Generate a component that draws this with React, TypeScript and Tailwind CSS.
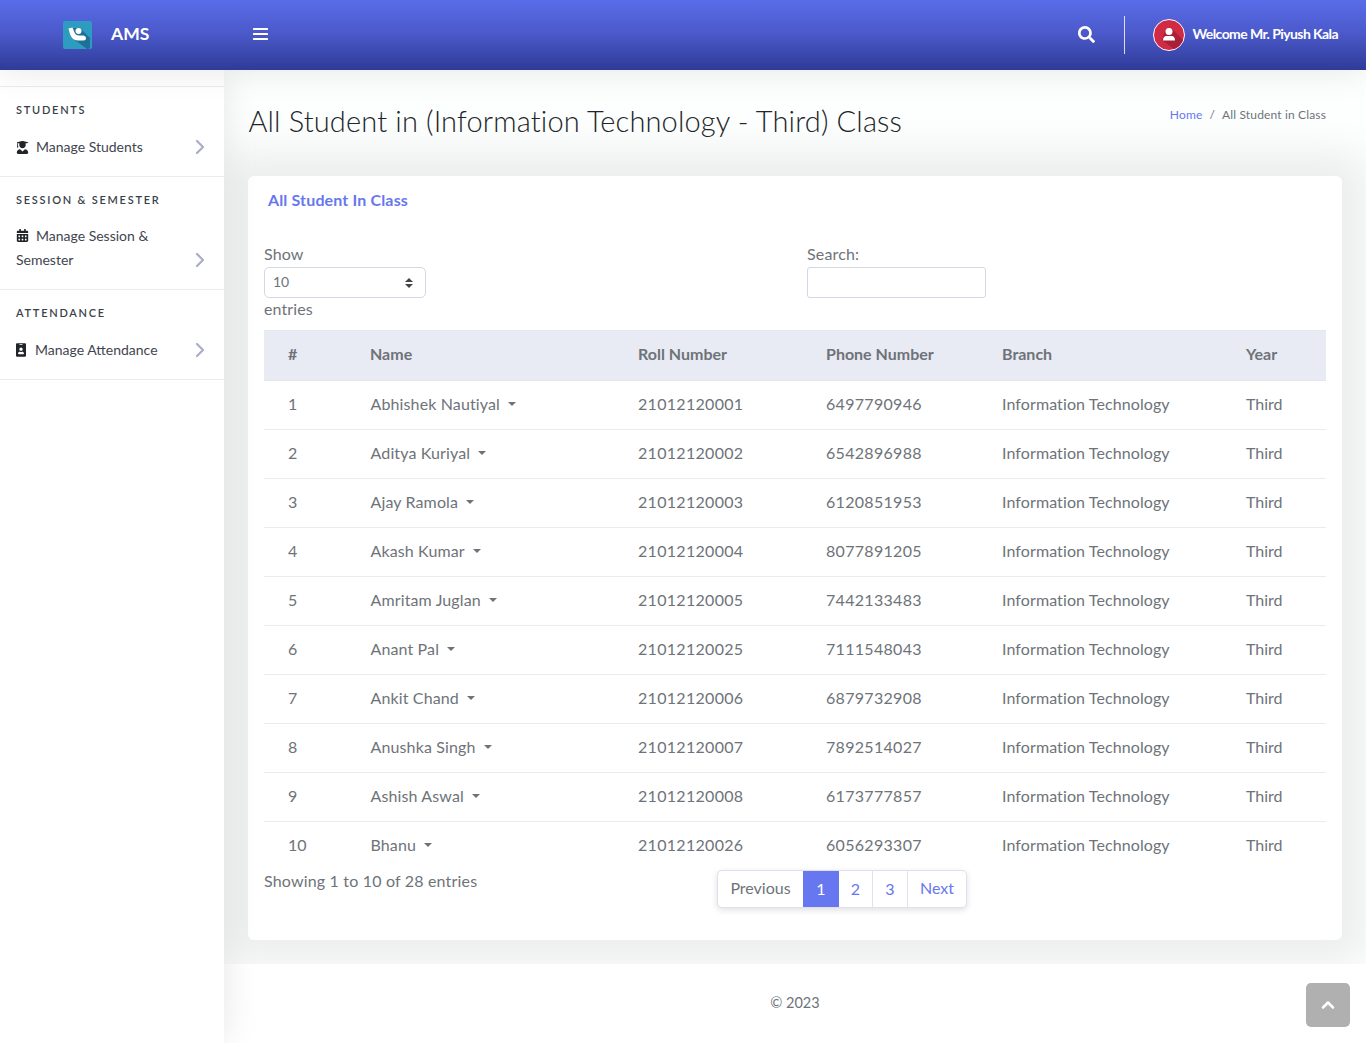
import { ChevronRight, ChevronUp } from "lucide-react";
import { FaCalendarAlt, FaIdBadge, FaSearch, FaUserGraduate } from "react-icons/fa";
import type { ReactNode } from "react";

const students = [
  ["1", "Abhishek Nautiyal", "21012120001", "6497790946"],
  ["2", "Aditya Kuriyal", "21012120002", "6542896988"],
  ["3", "Ajay Ramola", "21012120003", "6120851953"],
  ["4", "Akash Kumar", "21012120004", "8077891205"],
  ["5", "Amritam Juglan", "21012120005", "7442133483"],
  ["6", "Anant Pal", "21012120025", "7111548043"],
  ["7", "Ankit Chand", "21012120006", "6879732908"],
  ["8", "Anushka Singh", "21012120007", "7892514027"],
  ["9", "Ashish Aswal", "21012120008", "6173777857"],
  ["10", "Bhanu", "21012120026", "6056293307"],
];

function Logo() {
  return (
    <svg width="29" height="28" viewBox="0 0 29 28" className="shrink-0">
      <rect width="29" height="28" rx="2" fill="#2d9cc0" />
      <path d="M9 7 L17 7 L27 17 V26 Q27 28 25 28 H24 L8 16 Z" fill="#1f6f98" />
      <circle cx="15.5" cy="10" r="3" fill="#fff" />
      <path d="M5.5 7.5 L9.5 6.5 L12 12.5 Q13 14.5 16 14.5 H20.5 Q23 15 23 17 Q23 19.5 20.5 19.5 H15 Q9 19.5 7 13 Z" fill="#fff" />
    </svg>
  );
}

function Avatar() {
  return (
    <svg width="32" height="32" viewBox="0 0 32 32" className="shrink-0">
      <circle cx="16" cy="16" r="15.5" fill="#d02a45" stroke="#fff" />
      <path d="M13 10 L19 10 L30 21 A15 15 0 0 1 21 30 L9 21 Z" fill="#a81f38" />
      <circle cx="16" cy="12.5" r="3.5" fill="#fff" />
      <path d="M10 21.5 Q10 17 13.5 17 H18.5 Q22 17 22 21.5 Z" fill="#fff" />
    </svg>
  );
}

function Header() {
  return (
    <header className="relative z-20 flex h-[70px] shrink-0 items-center bg-gradient-to-b from-[#5a6ce9] via-[#4a58c8] to-[#2f3b98] pb-[1px] text-white shadow-[0_0_35px_rgba(0,0,0,0.1)]">
      <div className="ml-[63px] flex w-[190px] items-center">
        <Logo />
        <span className="ml-[19px] text-[17.5px] font-bold">AMS</span>
      </div>
      <svg width="15" height="12" viewBox="0 0 15 12" fill="#fff" className="mb-[1px]">
        <rect width="15" height="2" y="0" rx="0.5" />
        <rect width="15" height="2" y="5" rx="0.5" />
        <rect width="15" height="2" y="10" rx="0.5" />
      </svg>
      <div className="ml-auto flex items-center">
        <FaSearch className="text-[17px]" />
        <div className="mr-[28px] ml-[29px] h-[38px] w-px bg-white/80" />
        <Avatar />
        <span className="mr-[28px] ml-2 pb-[2px] text-[14px] font-bold tracking-[-0.58px]">Welcome Mr. Piyush Kala</span>
      </div>
    </header>
  );
}

function NavSection({ title, children }: { title: string; children: ReactNode }) {
  return (
    <div className="border-b border-[#e9ebf3]">
      <div className="pt-4 pl-4 text-[11px] leading-[14px] font-semibold tracking-[1.75px] text-[#3a3f4a]">{title}</div>
      {children}
    </div>
  );
}

function Chevron() {
  return <ChevronRight size={24} strokeWidth={2.2} className="shrink-0 text-[#a9adc8]" />;
}

function Sidebar() {
  return (
    <aside className="relative z-10 w-[224px] shrink-0 bg-white pt-4 shadow-[0_0_35px_rgba(0,0,0,0.1)]">
      <div className="border-t border-[#e9ebf3]">
        <NavSection title="STUDENTS">
          <div className="flex items-center justify-between pt-[18px] pr-3 pb-[17px] pl-4 text-[14px] leading-[24px] text-[#3f4550]">
            <span className="flex items-center">
              <FaUserGraduate className="mr-[7px] text-[13px] text-[#212529]" />
              Manage Students
            </span>
            <Chevron />
          </div>
        </NavSection>
        <NavSection title="SESSION & SEMESTER">
          <div className="flex items-end justify-between pt-[17px] pr-3 pb-[17px] pl-4 text-[14px] leading-[24px] text-[#3f4550]">
            <div>
              <FaCalendarAlt className="mr-[7px] inline-block align-[-1px] text-[13px] text-[#212529]" />
              Manage Session &amp;
              <br />
              Semester
            </div>
            <Chevron />
          </div>
        </NavSection>
        <NavSection title="ATTENDANCE">
          <div className="flex items-center justify-between pt-[18px] pr-3 pb-[17px] pl-4 text-[14px] leading-[24px] text-[#3f4550]">
            <span className="flex items-center">
              <FaIdBadge className="mr-[9px] h-[14px] w-[10px] text-[#212529]" />
              Manage Attendance
            </span>
            <Chevron />
          </div>
        </NavSection>
      </div>
    </aside>
  );
}

function StudentTable() {
  return (
    <table className="w-[1062px] table-fixed border-collapse text-left text-[16px] text-[#6e7379]">
      <colgroup>
        <col className="w-[82px]" />
        <col className="w-[268px]" />
        <col className="w-[188px]" />
        <col className="w-[176px]" />
        <col className="w-[244px]" />
        <col className="w-[104px]" />
      </colgroup>
      <thead>
        <tr className="h-[50px] border-y border-[#e3e6ee] bg-[#e8ebf3]">
          <th className="pb-1 pl-6 font-bold">#</th>
          <th className="pb-1 pl-6 font-bold">Name</th>
          <th className="pb-1 pl-6 font-bold">Roll Number</th>
          <th className="pb-1 pl-6 font-bold">Phone Number</th>
          <th className="pb-1 pl-6 font-bold">Branch</th>
          <th className="pb-1 pl-6 font-bold">Year</th>
        </tr>
      </thead>
      <tbody>
        {students.map((s, i) => (
          <tr key={s[0]} className={i < 9 ? "h-[49px] border-b border-[#e9ebf3]" : "h-[48px]"}>
            <td className="pb-[2px] pl-6">{s[0]}</td>
            <td className="pb-[2px] pl-[24.5px] tracking-[0.13px]">
              <span className="inline-flex items-center">
                {s[1]}
                <span className="ml-2 h-0 w-0 border-x-[4px] border-t-[4px] border-x-transparent border-t-[#6e7379]" />
              </span>
            </td>
            <td className="pb-[2px] pl-6 tracking-[0.3px]">{s[2]}</td>
            <td className="pb-[2px] pl-6 tracking-[0.3px]">{s[3]}</td>
            <td className="pb-[2px] pl-6 tracking-[0.1px]">Information Technology</td>
            <td className="pb-[2px] pl-6">Third</td>
          </tr>
        ))}
      </tbody>
    </table>
  );
}

function Pagination() {
  return (
    <div className="flex h-[38px] items-stretch rounded-[5px] border border-[#dfe1ee] bg-white pb-[1px] text-[16px] shadow-[0_2px_6px_rgba(0,0,0,0.13)]">
      <span className="flex w-[85px] items-center justify-center text-[#6e7379]">Previous</span>
      <span className="-mb-[1px] flex w-[36px] items-center justify-center bg-[#6777ef] text-white">1</span>
      <span className="-mb-[1px] flex w-[34px] items-center justify-center border-r border-[#dfe1ee] text-[#6777ef]">2</span>
      <span className="-mb-[1px] flex w-[35px] items-center justify-center border-r border-[#dfe1ee] text-[#6777ef]">3</span>
      <span className="flex w-[58px] items-center justify-center text-[#6777ef]">Next</span>
    </div>
  );
}

export default function App() {
  return (
    <div className="flex min-h-[1043px] flex-col bg-[#fdfefe] font-['Lato','Noto_Sans',sans-serif]">
      <Header />
      <div className="flex flex-1">
        <Sidebar />
        <main className="flex min-w-0 flex-1 flex-col">
          <div className="flex-1 px-6 pt-[30px] pb-6">
            <div className="relative z-10 flex h-[76px] items-start justify-between">
              <h1 className="ml-[0.5px] text-[29px] leading-[42px] font-light tracking-[0.15px] text-[#212529]">
                All Student in (Information Technology - Third) Class
              </h1>
              <div className="mt-[6px] mr-4 text-[12px] tracking-[0.15px] text-[#6e7379]">
                <span className="text-[#6777ef]">Home</span>
                <span className="mx-[7px]">/</span>
                All Student in Class
              </div>
            </div>
            <section className="h-[764px] rounded-md bg-white px-4 pt-[14px] pb-8 shadow-[0_0_40px_24px_rgba(0,0,0,0.07)]">
              <h2 className="ml-1 text-[16px] leading-[20px] font-bold tracking-[0.15px] text-[#6777ef]">All Student In Class</h2>
              <div className="mt-[32px] flex text-[16px] leading-[24px] text-[#6e7379]">
                <div className="w-[543px]">
                  <div className="h-[25px] tracking-[0.15px]">Show</div>
                  <div className="flex h-[31px] w-[162px] items-center justify-between rounded-[5px] border border-[#d5d6e4] bg-white pr-3 pb-[2px] pl-2 text-[14px]">
                    <span>10</span>
                    <svg width="8" height="10" viewBox="0 0 8 10" fill="#444" className="mt-[2px]">
                      <path d="M4 0 L8 4 H0 Z M4 10 L0 6 H8 Z" />
                    </svg>
                  </div>
                  <div className="h-[32px] pt-0 leading-[22px] tracking-[0.1px]">entries</div>
                </div>
                <div>
                  <div className="h-[25px] tracking-[0.15px]">Search:</div>
                  <div className="h-[31px] w-[179px] rounded-[3px] border border-[#d5d6e4] bg-white" />
                </div>
              </div>
              <StudentTable />
              <div className="relative flex items-start text-[16px] leading-[22px] text-[#6e7379]">
                <div className="tracking-[0.18px]">Showing 1 to 10 of 28 entries</div>
                <div className="absolute left-[453px]">
                  <Pagination />
                </div>
              </div>
            </section>
          </div>
          <footer className="relative flex h-[79px] items-center justify-center bg-white pb-[1px] text-[14.5px] text-[#6e7379]">
            © 2023
          </footer>
        </main>
      </div>
      <button className="fixed right-4 bottom-4 z-30 flex h-11 w-11 items-center justify-center rounded-[5px] bg-[#b0b0b0] text-white">
        <ChevronUp size={20} strokeWidth={3} />
      </button>
    </div>
  );
}
